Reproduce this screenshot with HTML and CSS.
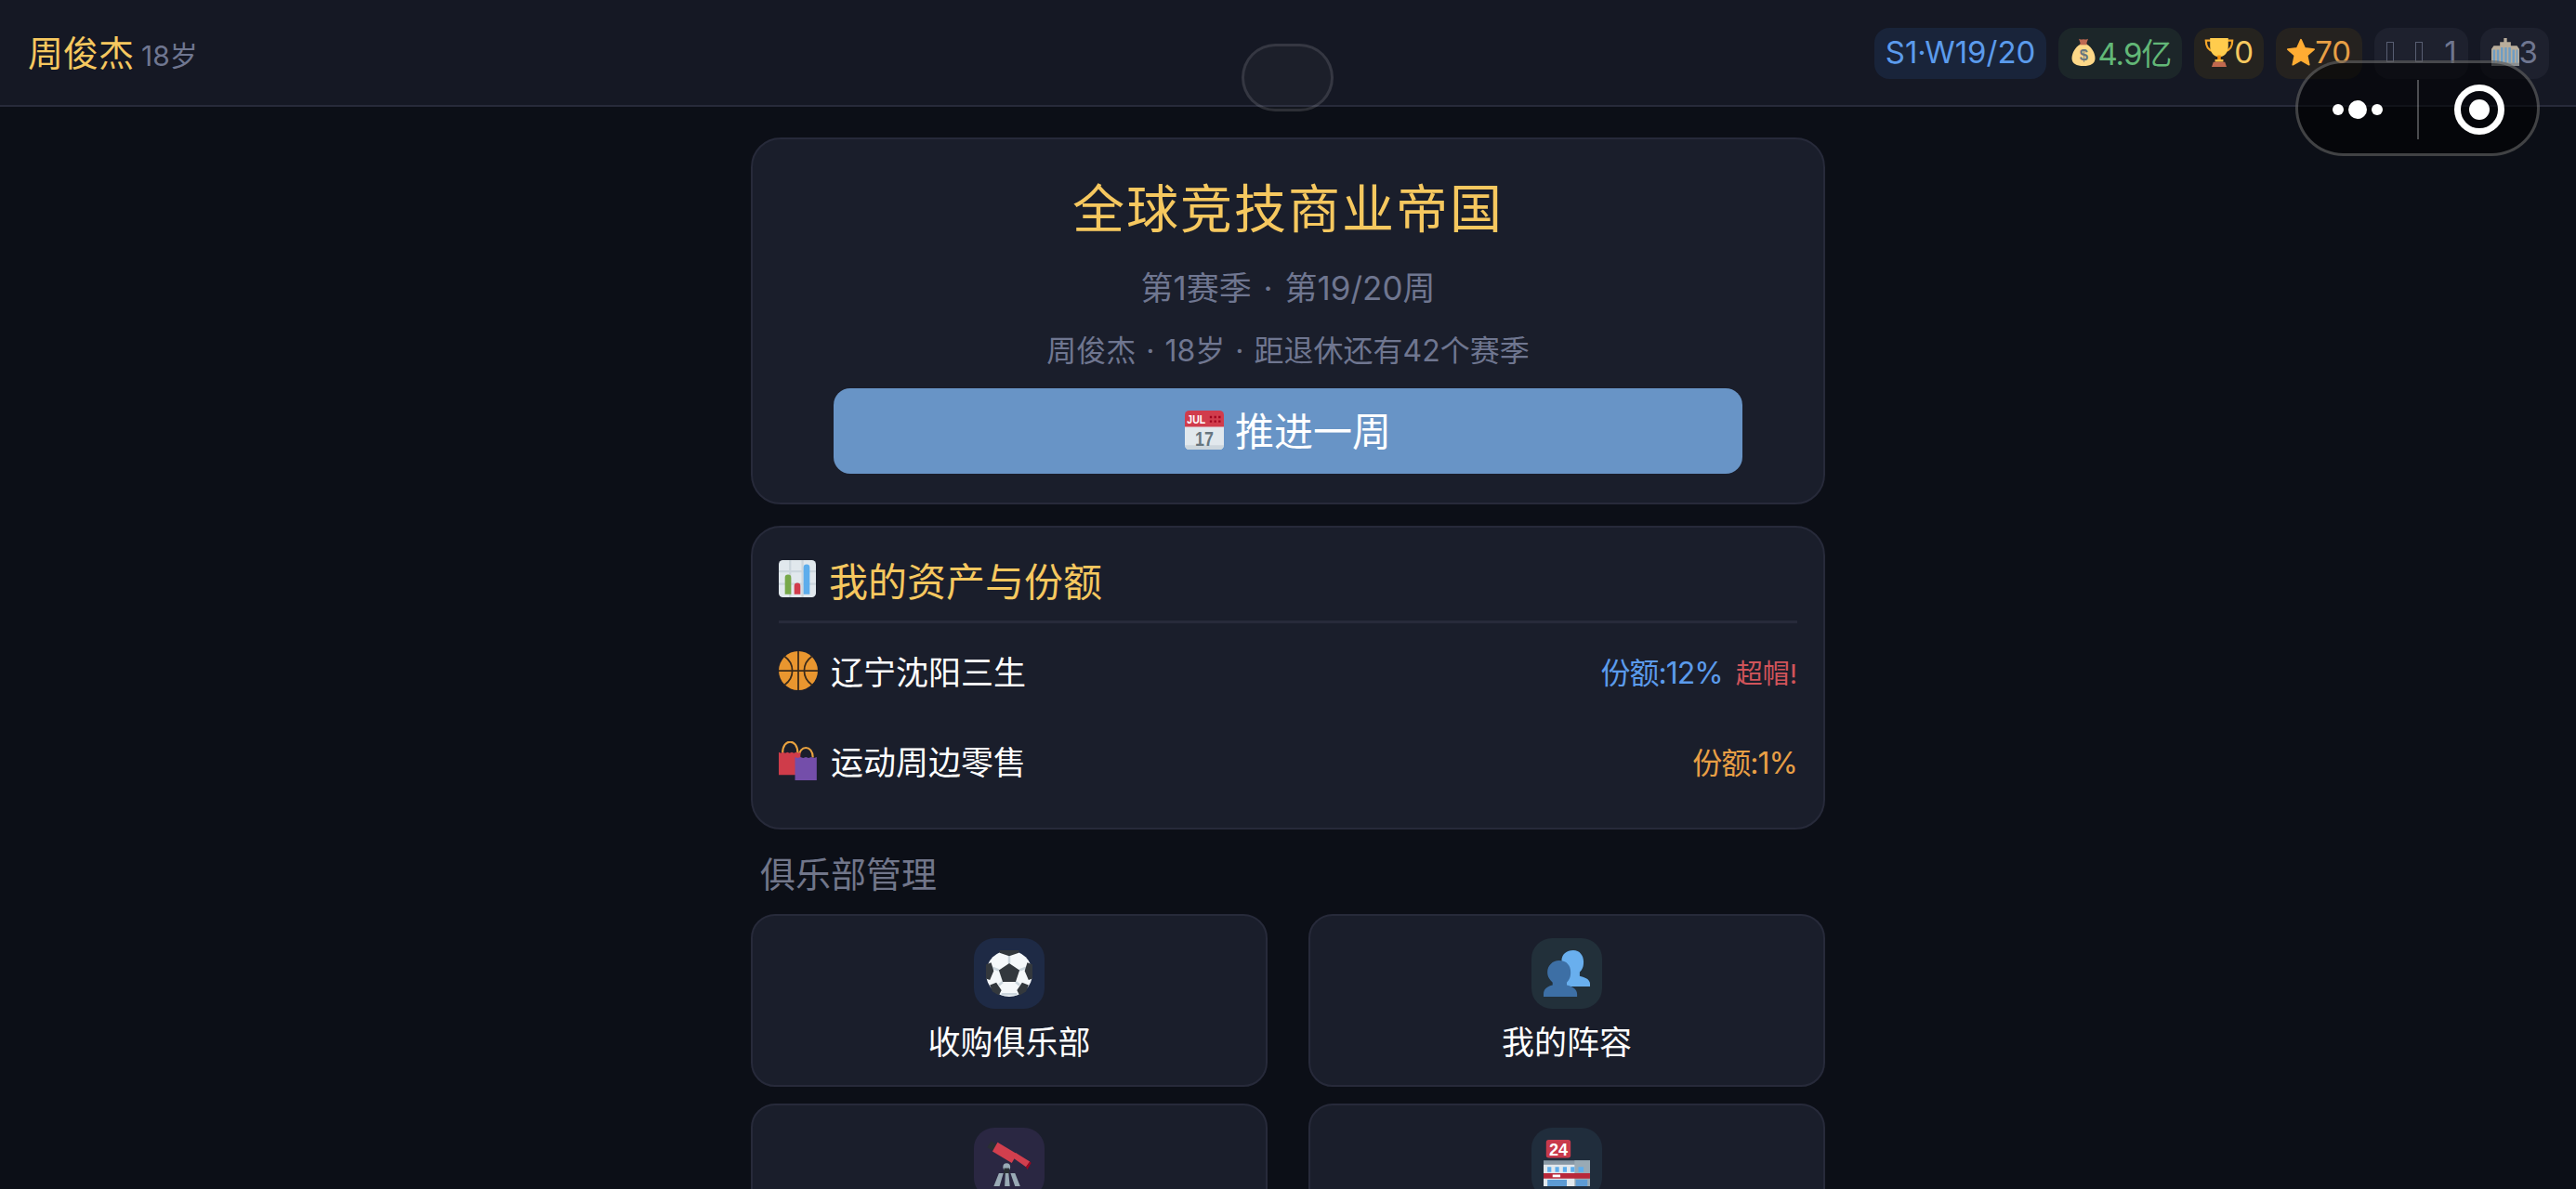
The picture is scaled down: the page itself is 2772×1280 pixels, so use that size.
FILE: index.html
```html
<!DOCTYPE html>
<html lang="zh-CN">
<head>
  <meta charset="UTF-8">
  <title>全球竞技商业帝国</title>
  <link rel="stylesheet" href="styles.css">
</head>
<body>
  <svg class="sprite" xmlns="http://www.w3.org/2000/svg">
    <symbol id="i-bag" viewBox="0 0 36 36">
      <path fill="#BF6952" d="M12 1c2 1.500 4 .5 6 .5s4 1 6-.5l-2.500 7h-7z"/>
      <path fill="#FDD888" d="M14 8h8c6 3 11 11 11 18 0 7-6 10-15 10S3 33 3 26c0-7 5-15 11-18z"/>
      <path fill="#BF6952" d="M13.500 7h9v1.800h-9z"/>
      <text x="18" y="29" text-anchor="middle" class="svg-text" font-size="20" fill="#67757F">$</text>
    </symbol>
    <symbol id="i-trophy" viewBox="0 0 36 36">
      <path fill="none" stroke="#F4A62A" stroke-width="2.500" d="M8 4H2c0 8 3 12 9 13M28 4h6c0 8-3 12-9 13"/>
      <path fill="#FFCC4D" d="M7 1h22v10c0 8-5 13-11 13S7 19 7 11z"/>
      <path fill="#F4900C" d="M16 22h4v7h-4z"/>
      <path fill="#F9C04A" d="M13 27h10v3H13z"/>
      <path fill="#C1694F" d="M11 30h14l2 6H9z"/>
    </symbol>
    <symbol id="i-star" viewBox="0 0 36 36">
      <path fill="#FFAC33" stroke="#FFAC33" stroke-width="2" stroke-linejoin="round" d="M18 2l5 11 12 1.500-9 8 2.500 12L18 28.500 7.500 34.500l2.500-12-9-8L13 13z"/>
    </symbol>
    <symbol id="i-tower" viewBox="0 0 36 36">
      <path fill="#B9AD9B" d="M16 0h4v5h5v5h8l3 4v22H0V14l3-4h8V5h5z"/>
      <path fill="#6F9DC4" d="M2 15h3v17H2zM7 15h3v17H7zM12 12h3v20h-3zM17 12h3v20h-3zM22 12h3v20h-3zM27 15h3v17h-3zM32 15h2v17h-2z"/>
      <path fill="#8A8F92" d="M0 32h36v4H0z"/>
    </symbol>
    <symbol id="i-calendar" viewBox="0 0 36 36">
      <path fill="#E1E8ED" d="M32 36H4a4 4 0 0 1-4-4V8h36v24a4 4 0 0 1-4 4z"/>
      <path fill="#CCD6DD" d="M0 32h36a4 4 0 0 1-4 4H4a4 4 0 0 1-4-4z"/>
      <path fill="#D13C4C" d="M32 0H4a4 4 0 0 0-4 4v11h36V4a4 4 0 0 0-4-4z"/>
      <text x="2" y="12" class="svg-text" font-size="11" textLength="17" lengthAdjust="spacingAndGlyphs" fill="#fff">JUL</text>
      <path fill="#A0041E" d="M23 5h2v2h-2zM27 5h2v2h-2zM31 5h2v2h-2zM23 9h2v2h-2zM27 9h2v2h-2zM31 9h2v2h-2z"/>
      <text x="18" y="32.500" text-anchor="middle" class="svg-text" font-size="19" textLength="17" lengthAdjust="spacingAndGlyphs" fill="#66757F">17</text>
    </symbol>
    <symbol id="i-chart" viewBox="0 0 36 36">
      <rect width="36" height="36" rx="4" fill="#E1E8ED"/>
      <path fill="#CCD6DD" d="M10 0h2v36h-2zM22 0h2v36h-2zM0 10h36v2H0zM0 22h36v2H0z"/>
      <path fill="#77A84A" d="M6 17a3 3 0 0 1 6 0v16H6z"/>
      <path fill="#D13C4C" d="M15 25a3 3 0 0 1 6 0v8h-6z"/>
      <path fill="#5DADEC" d="M24 7a3 3 0 0 1 6 0v26h-6z"/>
    </symbol>
    <symbol id="i-ball" viewBox="0 0 36 36">
      <circle cx="18" cy="18" r="18" fill="#E9962F"/>
      <path fill="none" stroke="#3A2A1A" stroke-width="1.500" d="M0 18h36M18 0v36M5.500 5c5 3.500 7 8 7 13s-2 9.500-7 13M30.500 5c-5 3.500-7 8-7 13s2 9.500 7 13"/>
    </symbol>
    <symbol id="i-bags" viewBox="0 0 36 36">
      <path fill="none" stroke="#E9A23F" stroke-width="1.800" d="M3.500 11C3.500-3 17.500-3 17.500 11M18.500 15c0-12 13-12 13 0"/>
      <path fill="#CF3C4A" d="M0 10l2 1 2-1 2 1 2-1 2 1 2-1 2 1 2-1 2 1 2-1v21H0z"/>
      <path fill="#744EAA" d="M15 14.500l2.500 1 2.500-1 2.500 1 2.500-1 2.500 1 2.500-1 2.500 1 2.500-1V36H15z"/>
    </symbol>
    <symbol id="i-soccer" viewBox="0 0 36 36">
      <clipPath id="ball-clip"><circle cx="18" cy="18" r="18"/></clipPath>
      <circle cx="18" cy="18" r="18" fill="#F5F8FA"/>
      <g clip-path="url(#ball-clip)">
        <path fill="none" stroke="#CCD6DD" stroke-width="1.800" d="M18 10V4M26 15.500l5-2M23 24.500l3 2.500M13 24.500l-3 2.500M10 15.500l-5-2M12 34h12"/>
        <path fill="#33383D" d="M18 10l8 5.500-3 9H13l-3-9z"/>
        <path fill="#33383D" d="M10.500 0h15v2L18 4.500 10.500 2zM0 11l4-1.500 2 6.500-3 7-3-1zM36 11l-4-1.500-2 6.500 3 7 3-1zM3 27l5-2 4 6-2 4-5-3zM33 27l-5-2-4 6 2 4 5-3z"/>
      </g>
    </symbol>
    <symbol id="i-people" viewBox="0 0 36 36">
      <path fill="#69AFEE" d="M23 0c5 0 8 4 8 9 0 4-1 6-3 8v3c3 1 8 2 8 6v2H16l-2-10 2-5c-1-1-2-3-2-5 0-5 4-8 9-8z"/>
      <path fill="#3D6FA5" d="M12 8c6 0 9 4 9 9 0 4-1 6-3 8v2c4 1 8 3 8 7v2H0v-2c0-4 3-6 7-7v-2c-2-2-4-4-4-8 0-5 4-9 9-9z"/>
    </symbol>
    <symbol id="i-scope" viewBox="0 0 36 36">
      <path fill="#292F33" d="M1 6l3-5 6 3.500-3 5z"/>
      <path fill="#D23F4E" d="M5 9l4-7 15 9-4 7z"/>
      <path fill="#D23F4E" d="M21 14l2-4 11 7-3 4z"/>
      <path fill="#A0041E" d="M31 21l3-4 1 1-3 5z"/>
      <circle cx="16" cy="21" r="2.800" fill="#99AAB5"/>
      <path fill="#292F33" d="M14 22h4v5h-4z"/>
      <path fill="#99AAB5" d="M10 26h3.500l-3 10H6zM15 26h2.500l1 10h-4zM19 26h3.500l4 10h-4z"/>
    </symbol>
    <symbol id="i-store" viewBox="0 0 36 36">
      <rect x="2" y="0" width="19" height="14" rx="2" fill="#C83A4C"/>
      <text x="11.500" y="12" text-anchor="middle" class="svg-text" font-size="13" fill="#fff">24</text>
      <path fill="#8899A6" d="M0 16h36v3H0z"/>
      <path fill="#E1E8ED" d="M0 19h36v17H0z"/>
      <path fill="#99AAB5" d="M24 16h12v20H24z"/>
      <path fill="#5DADEC" d="M3 21h3v4H3zM9 21h3v4H9zM15 21h3v4h-3zM21 21h3v4h-3zM27 21h4v4h-4z"/>
      <path fill="#B8283A" d="M0 26h36v4H0z"/>
      <path fill="#fff" d="M7 27h6v2H7z"/>
      <path fill="#5D9BD4" d="M3 31h15v5H3zM25 31h9v5h-9z"/>
    </symbol>
  </svg>

  <header class="topbar">
    <div class="who">
      <span class="who-name">周俊杰</span>
      <span class="who-age">18岁</span>
    </div>
    <div class="chips">
      <span class="chip chip-blue">S1·W19/20</span>
      <span class="chip chip-green"><svg class="chip-icon narrow"><use href="#i-bag"/></svg>4.9亿</span>
      <span class="chip chip-gold"><svg class="chip-icon"><use href="#i-trophy"/></svg>0</span>
      <span class="chip chip-orange"><svg class="chip-icon narrow"><use href="#i-star"/></svg>70</span>
      <span class="chip chip-gray"><i class="tofu"></i><i class="tofu"></i>1</span>
      <span class="chip chip-gray"><svg class="chip-icon narrow"><use href="#i-tower"/></svg>3</span>
    </div>
  </header>

  <div class="pill"></div>

  <div class="capsule">
    <div class="capsule-dots"><i></i><i class="big"></i><i></i></div>
    <div class="capsule-line"></div>
    <div class="capsule-ring"><i></i></div>
  </div>

  <main class="page">
    <section class="card hero">
      <h1 class="hero-title">全球竞技商业帝国</h1>
      <p class="hero-week">第1赛季 · 第19/20周</p>
      <p class="hero-info">周俊杰 · 18岁 · 距退休还有42个赛季</p>
      <button class="next-btn"><svg class="btn-icon"><use href="#i-calendar"/></svg>推进一周</button>
    </section>

    <section class="card assets">
      <h2 class="assets-title"><svg class="title-icon"><use href="#i-chart"/></svg>我的资产与份额</h2>
      <div class="asset-row">
        <span class="asset-name"><svg class="row-icon"><use href="#i-ball"/></svg>辽宁沈阳三生</span>
        <span class="asset-share share-blue">份额:12%<em class="over">超帽!</em></span>
      </div>
      <div class="asset-row">
        <span class="asset-name"><svg class="row-icon"><use href="#i-bags"/></svg>运动周边零售</span>
        <span class="asset-share share-orange">份额:1%</span>
      </div>
    </section>

    <h3 class="section-name">俱乐部管理</h3>
    <div class="menu-grid">
      <div class="menu-card">
        <div class="menu-icon bg-blue"><svg><use href="#i-soccer"/></svg></div>
        <div class="menu-label">收购俱乐部</div>
      </div>
      <div class="menu-card">
        <div class="menu-icon bg-teal"><svg><use href="#i-people"/></svg></div>
        <div class="menu-label">我的阵容</div>
      </div>
      <div class="menu-card">
        <div class="menu-icon bg-purple"><svg><use href="#i-scope"/></svg></div>
      </div>
      <div class="menu-card">
        <div class="menu-icon bg-slate"><svg><use href="#i-store"/></svg></div>
      </div>
    </div>
  </main>
</body>
</html>
```

FILE: styles.css
```css
html, body {
  margin: 0;
  height: 1280px;
  overflow: hidden;
  background: #0c0f17;
  color: #fff;
  font-family: Inter, "Noto Sans CJK SC", sans-serif;
}
.sprite { display: none; }
.svg-text {
  font-family: "Liberation Sans", sans-serif;
  font-weight: 700;
}

/* top bar */
.topbar {
  height: 83px;
  border-bottom: 2px solid #272a3a;
  background: #151824;
  display: flex;
  align-items: flex-start;
  justify-content: space-between;
  padding: 30px 29px 0 30px;
  margin-bottom: 33px;
}
.who {
  display: flex;
  align-items: baseline;
  gap: 8px;
  margin-top: -3px;
}
.who-name { font-size: 38px; color: #f6c85f; }
.who-age { font-size: 30px; color: #6f7690; }

.chips { display: flex; gap: 13px; }
.chip {
  box-sizing: border-box;
  height: 55px;
  padding: 0 12px 3px;
  border-radius: 16px;
  display: flex;
  align-items: center;
  font-size: 33px;
  white-space: nowrap;
}
.chip-blue { background: #19243a; color: #5b9bec; }
.chip-green { background: #1c2629; color: #62b777; letter-spacing: -1px; }
.chip-gold { background: #25231f; color: #f6c85f; padding: 0 11px 3px; }
.chip-orange { background: #25221f; color: #e89f45; }
.chip-gray { background: #1e212e; color: #6f7690; }
.chip-icon { width: 32px; height: 32px; flex: none; }
.chip-icon.narrow { width: 30px; }
.tofu {
  box-sizing: border-box;
  width: 8px;
  height: 22px;
  border: 1.5px solid #585e72;
  margin-right: 23px;
  margin-left: 1px;
}
.tofu + .tofu { margin-left: 0; }

/* window controls over the page */
.pill {
  position: absolute;
  left: 1336px;
  top: 47px;
  width: 93px;
  height: 67px;
  border: 3px solid rgba(255, 255, 255, 0.11);
  border-radius: 37px;
  background: rgba(255, 255, 255, 0.03);
}
.capsule {
  position: absolute;
  left: 2470px;
  top: 65px;
  width: 257px;
  height: 97px;
  border: 3px solid rgba(255, 255, 255, 0.24);
  border-radius: 52px;
  background: rgba(0, 0, 0, 0.55);
  display: flex;
  align-items: center;
}
.capsule-dots {
  width: 128px;
  display: flex;
  align-items: center;
  justify-content: center;
  gap: 5px;
  margin-top: 2px;
}
.capsule-dots i {
  width: 12px;
  height: 12px;
  border-radius: 50%;
  background: #fff;
}
.capsule-dots i.big { width: 20px; height: 20px; }
.capsule-line {
  width: 2px;
  height: 64px;
  margin-top: 2px;
  background: rgba(255, 255, 255, 0.28);
}
.capsule-ring {
  width: 40px;
  height: 40px;
  margin: 2px 0 0 38px;
  border: 7px solid #fff;
  border-radius: 50%;
  display: flex;
  align-items: center;
  justify-content: center;
}
.capsule-ring i {
  width: 22px;
  height: 22px;
  border-radius: 50%;
  background: #fff;
}

/* page */
.page {
  width: 1156px;
  margin: 0 auto;
}
.card {
  box-sizing: border-box;
  background: #1a1e2b;
  border: 2px solid #272a3a;
  border-radius: 32px;
}
.hero {
  height: 395px;
  padding: 0 87px;
  display: flex;
  flex-direction: column;
  align-items: center;
  margin-bottom: 23px;
}
.hero-title {
  margin: 36px 0 0;
  font-size: 56px;
  line-height: 78px;
  font-weight: 400;
  letter-spacing: 2px;
  color: #f6c85f;
}
.hero-week {
  margin: 22px 0 0;
  font-size: 35px;
  line-height: 48px;
  word-spacing: 3px;
  color: #6f7690;
}
.hero-info {
  margin: 22px 0 0;
  font-size: 32px;
  line-height: 44px;
  word-spacing: 2px;
  color: #6f7690;
}
.next-btn {
  width: 100%;
  height: 92px;
  flex: none;
  margin-top: 18px;
  padding: 0 0 5px;
  border: 0;
  border-radius: 18px;
  background: #6894c6;
  color: #fff;
  font: inherit;
  font-size: 42px;
  display: flex;
  align-items: center;
  justify-content: center;
  gap: 12px;
}
.btn-icon { width: 42px; height: 42px; margin-top: 3px; }

.assets {
  height: 327px;
  padding: 0 28px;
  margin-bottom: 22px;
}
.assets-title {
  margin: 0 0 2px;
  height: 103px;
  box-sizing: border-box;
  padding-top: 10px;
  border-bottom: 3px solid #272a3a;
  display: flex;
  align-items: center;
  gap: 14px;
  font-size: 42px;
  font-weight: 400;
  color: #f6c85f;
}
.title-icon { width: 40px; height: 40px; }
.asset-row {
  height: 97px;
  display: flex;
  align-items: center;
  justify-content: space-between;
}
.asset-name {
  display: flex;
  align-items: center;
  gap: 14px;
  font-size: 35px;
}
.row-icon { width: 42px; height: 42px; }
.asset-share { font-size: 32px; letter-spacing: -1px; }
.share-blue { color: #5b9bec; }
.share-orange { color: #e89f45; }
.over {
  font-style: normal;
  font-size: 29px;
  letter-spacing: 0;
  color: #d0545a;
  margin-left: 14px;
}

.section-name {
  margin: 1px 0 17px 10px;
  font-size: 38px;
  line-height: 52px;
  font-weight: 400;
  color: #71768a;
}
.menu-grid {
  display: grid;
  grid-template-columns: 1fr 1fr;
  grid-auto-rows: 186px;
  column-gap: 44px;
  row-gap: 18px;
}
.menu-card {
  box-sizing: border-box;
  background: #1a1e2b;
  border: 2px solid #272a3a;
  border-radius: 26px;
  padding-top: 24px;
  display: flex;
  flex-direction: column;
  align-items: center;
}
.menu-icon {
  width: 76px;
  height: 76px;
  flex: none;
  border-radius: 22px;
  display: flex;
  align-items: center;
  justify-content: center;
}
.menu-icon svg { width: 50px; height: 50px; }
.bg-blue { background: #1e2a45; }
.bg-teal { background: #22303a; }
.bg-purple { background: #2a2742; }
.bg-slate { background: #202d3c; }
.menu-label {
  margin-top: 12px;
  font-size: 35px;
  line-height: 48px;
}
```
